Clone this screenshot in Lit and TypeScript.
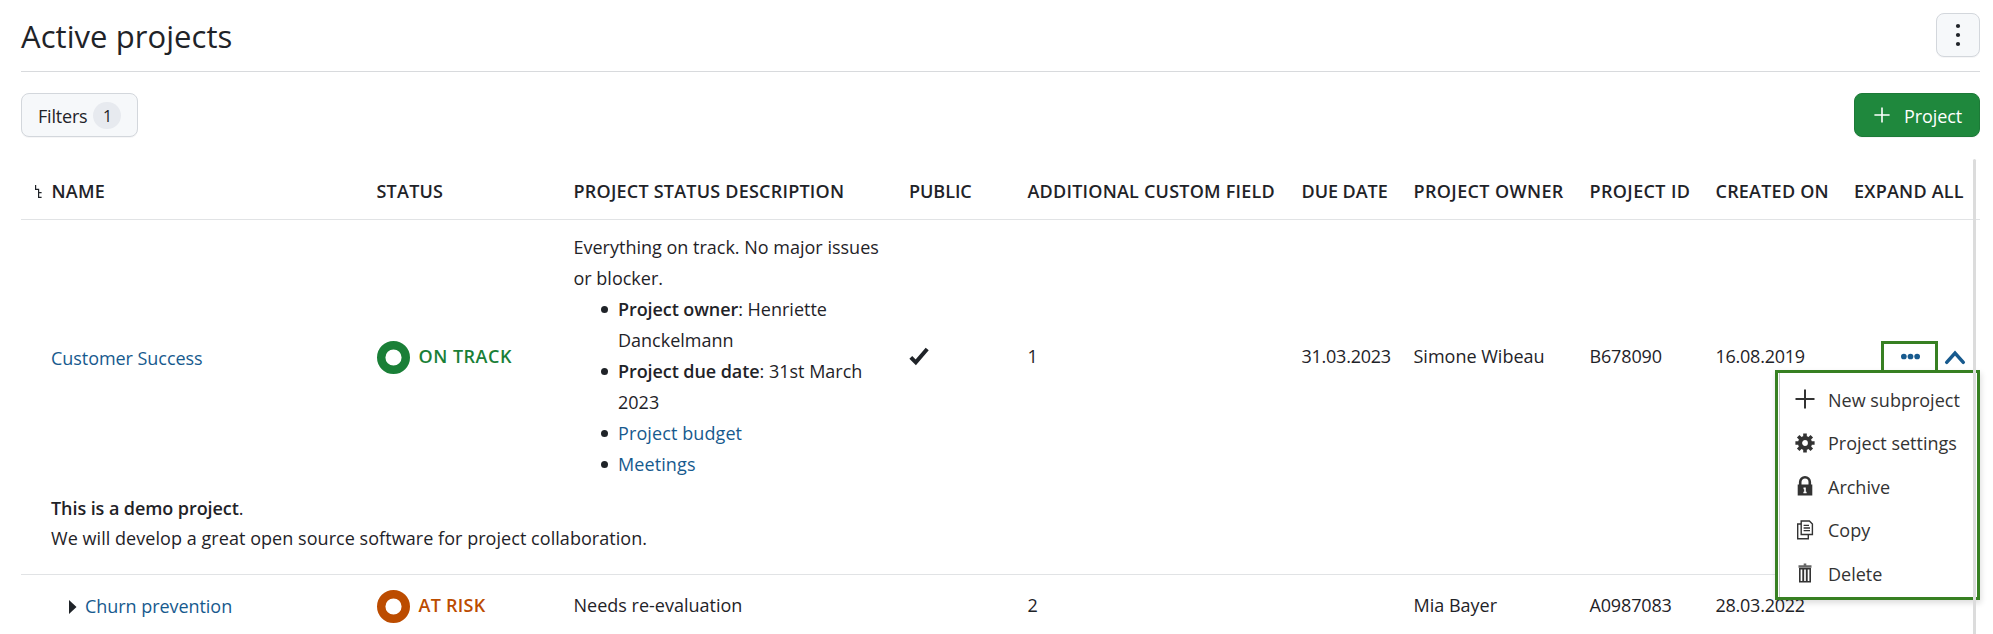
import { LitElement, html, css, svg, nothing } from "lit";
import { customElement, property } from "lit/decorators.js";
import { classMap } from "lit/directives/class-map.js";

const glyphs: Record<string, unknown> = {
  plus: svg`<path d="M10 .5v19M.5 10h19" fill="none" stroke="currentColor" stroke-width="2"/>`,
  gear: svg`<circle cx="10" cy="10" r="5" fill="none" stroke="currentColor" stroke-width="4.2"/>
    <g stroke="currentColor" stroke-width="3.6"><path d="M10 .4v4M10 15.6v4M.4 10h4M15.6 10h4M3.2 3.2l3 3M13.8 13.8l3 3M16.8 3.2l-3 3M6.2 13.8l-3 3"/></g>`,
  lock: svg`<path d="M5.2 9V6a4.8 4.8 0 0 1 9.6 0v3" fill="none" stroke="currentColor" stroke-width="2.6"/>
    <path fill="currentColor" fill-rule="evenodd" d="M2.7 8.6h14.6v11H2.7zM8.5 11.6v1.6h.7v2.6h-.8v1.4h3.2v-1.4h-.8v-4.2z"/>`,
  copy: svg`<g fill="none" stroke="currentColor" stroke-width="1.4"><path d="M6.2 1h8.2l3 3v10.500H6.200z"/><path d="M6 4H2.700v14.700h10.600v-3.700"/><path d="M8.600 5.400h5.400M8.600 8h6.400M8.600 10.600h6.400" stroke-width="1.300"/></g>`,
  trash: svg`<path fill="currentColor" opacity=".75" d="M3.500 2.200h13v2.600h-13zM8.700.5h2.600v2H8.700z"/>
    <path fill="currentColor" fill-rule="evenodd" d="M4 5h12v14.500H4zM5.600 6.500v11.400h1.700V6.500zM9.150 6.500v11.400h1.700V6.500zM12.700 6.500v11.400h1.700V6.500z"/>`,
  check: svg`<path d="M1.800 11.400l5 5L18.200 3" fill="none" stroke="currentColor" stroke-width="4"/>`,
  chevron: svg`<path d="M1.700 15.300L10 6.100l8.300 9.200" fill="none" stroke="currentColor" stroke-width="3.500" stroke-linecap="round"/>`,
  dots: svg`<g fill="currentColor"><circle cx="3" cy="10" r="3"/><circle cx="10" cy="10" r="3"/><circle cx="17" cy="10" r="3"/></g>`,
  kebab: svg`<g fill="currentColor"><circle cx="10" cy="1" r="2.100"/><circle cx="10" cy="10" r="2.100"/><circle cx="10" cy="19" r="2.100"/></g>`,
  ring: svg`<circle cx="10" cy="10" r="7.450" fill="none" stroke="currentColor" stroke-width="5.100"/>`,
};

@customElement("op-icon")
class OpIcon extends LitElement {
  @property() name = "plus";
  static styles = css`
    :host { display: inline-block; width: 20px; height: 20px; flex: none; }
    svg { display: block; width: 100%; height: 100%; overflow: visible; }
  `;
  render() {
    return html`<svg viewBox="0 0 20 20">${glyphs[this.name]}</svg>`;
  }
}

@customElement("op-menu")
class OpMenu extends LitElement {
  static styles = css`
    :host { display: block; box-sizing: border-box; width: 205px; height: 230px; border: 3px solid #378022; background: #fff; box-shadow: 1px 3px 6px rgba(0, 0, 0, .14); color: #333; }
    .list { display: flex; flex-direction: column; height: 100%; box-sizing: border-box; margin-left: 1px; border-left: 1px solid #c8c8c8; padding: 4.500px 0 0 14.500px; }
    .item { display: flex; align-items: center; height: 43.5px; gap: 13.500px; white-space: nowrap; }
    .label { line-height: 26px; padding-top: 1px; }
  `;
  items = [["plus", "New subproject"], ["gear", "Project settings"], ["lock", "Archive"], ["copy", "Copy"], ["trash", "Delete"]];
  render() {
    return html`<div class="list">${this.items.map(([icon, label]) => html`
      <div class="item"><op-icon name=${icon}></op-icon><span class="label">${label}</span></div>`)}</div>`;
  }
}

const headings = ["STATUS", "PROJECT STATUS DESCRIPTION", "PUBLIC", "ADDITIONAL CUSTOM FIELD", "DUE DATE", "PROJECT OWNER", "PROJECT ID", "CREATED ON", "EXPAND ALL"];

@customElement("app-root")
class AppRoot extends LitElement {
  static styles = css`
    :host { display: block; position: relative; box-sizing: border-box; height: 634px; padding: 0 13px 0 21px; overflow: hidden; background: #fff; color: #1f2328; font: 18px/31px "Open Sans", "Noto Sans", sans-serif; white-space: nowrap; }
    .top { display: flex; justify-content: space-between; align-items: flex-start; height: 72px; box-sizing: border-box; padding-top: 13px; border-bottom: 1px solid #d8dadd; }
    h1 { margin: 0; font-size: 31px; line-height: 47px; font-weight: 400; letter-spacing: .06px; }
    .btn { display: flex; align-items: center; box-sizing: border-box; height: 44px; border: 1px solid #d3d7dc; border-radius: 8px; background: #f6f8fa; box-shadow: 0 1px 0 rgba(31, 35, 40, .04); }
    .square { width: 44px; justify-content: center; }
    .tools { display: flex; justify-content: space-between; padding-top: 21px; height: 65px; box-sizing: border-box; }
    .filters { width: 117px; padding: 2px 0 0 16px; letter-spacing: -.2px; }
    .count { width: 28px; height: 27px; margin: -2px 0 0 6px; border-radius: 14px; background: #e7eaef; text-align: center; font-size: 16px; line-height: 29px; }
    .add { width: 126px; padding-left: 19px; color: #fff; background: #1f883d; border-color: #1d7a38; letter-spacing: -.1px; }
    .add op-icon { width: 16px; height: 16px; margin: -1px 14px 0 0; }
    .add .label { padding-top: 2px; }
    .row { display: grid; grid-template-columns: 325.5px 197px 335.5px 118.5px 274px 112px 176px 126px 138.5px 1fr; align-items: center; padding-left: 30px; }
    .head { height: 83px; padding-top: 26px; box-sizing: border-box; border-bottom: 1px solid #e1e3e5; font-weight: 600; letter-spacing: .22px; }
    .head .first { display: flex; align-items: center; margin-left: -16.5px; }
    .tree { width: 7px; height: 13px; margin-right: 10px; }
    .desc { white-space: normal; width: 315px; }
    .wide { letter-spacing: .38px; }
    .snug { letter-spacing: -.05px; }
    .body { padding-top: 12px; padding-bottom: 12px; }
    .sub { height: 61px; padding-top: 0; padding-bottom: 0; }
    .link { color: #175a8e; }
    .name { display: flex; align-items: center; padding-top: 4px; letter-spacing: -.05px; }
    .indent { padding: 2px 0 0 18px; }
    .arrow { width: 8px; height: 14px; margin-right: 8px; }
    .status { display: flex; align-items: center; gap: 9px; font-weight: 600; letter-spacing: .5px; color: #1a7f37; padding-top: 2px; }
    .risk { color: #bc4c00; letter-spacing: .25px; }
    .ring { width: 33px; height: 33px; }
    .state { margin-top: -2px; }
    .num { letter-spacing: -.25px; }
    .code { letter-spacing: -.15px; }
    ul { margin: 0; padding: 0; list-style: none; }
    li { padding-left: 44.5px; display: grid; grid-template-columns: 1fr; }
    li::before { content: ""; grid-area: 1 / 1; width: 7px; height: 7px; margin: 12px 0 0 -17.5px; border-radius: 50%; background: currentColor; }
    li > span { grid-area: 1 / 1; }
    li .link { letter-spacing: .1px; }
    b { font-weight: 600; letter-spacing: -.08px; }
    .about { padding: 1px 0 21px 30px; line-height: 30px; letter-spacing: .05px; border-bottom: 1px solid #e1e3e5; }
    .actions { display: flex; position: relative; align-items: center; height: 31px; padding-left: 46.5px; color: #175a8e; }
    .actions .more { width: 19px; height: 19px; }
    .actions .up { margin: 2px 0 0 25.500px; }
    .frame { position: absolute; left: 27px; top: 0; box-sizing: border-box; width: 57px; height: 33px; border: 3px solid #378022; }
    op-menu { position: absolute; left: 1775px; top: 370px; line-height: 26px; }
    .bar { position: absolute; right: 17px; top: 159px; bottom: 0; width: 3px; border-radius: 2px 2px 0 0; background: #dcdcdc; }
  `;
  status(text: string, risk = false) {
    return html`<div class=${classMap({ status: true, risk })}><op-icon class="ring" name="ring"></op-icon><span class="state">${text}</span></div>`;
  }
  render() {
    return html`
      <div class="top"><h1>Active projects</h1><div class="btn square"><op-icon name="kebab"></op-icon></div></div>
      <div class="tools">
        <div class="btn filters">Filters<span class="count">1</span></div>
        <div class="btn add"><op-icon name="plus"></op-icon><span class="label">Project</span></div>
      </div>
      <div class="row head">
        <div class="first"><svg class="tree" viewBox="0 0 7 13" fill="none" stroke="#1f2328" stroke-width="1.200"><path d="M.6 0v4.400H3.600v7.900H6.600M3.600 7.600H6.600"/></svg>NAME</div>
        ${headings.map((h) => html`<div class=${/OWNER|ID$/.test(h) ? "wide" : /PUBLIC|DUE/.test(h) ? "snug" : nothing}>${h}</div>`)}
      </div>
      <div class="row body">
        <div class="name link">Customer Success</div>
        ${this.status("ON TRACK")}
        <div class="desc">Everything on track. No major issues or blocker.
          <ul>
            <li><span><b>Project owner</b>: Henriette<br>Danckelmann</span></li>
            <li><span><b>Project due date</b>: 31st March<br>2023</span></li>
            <li><span class="link">Project budget</span></li>
            <li><span class="link">Meetings</span></li>
          </ul>
        </div>
        <op-icon name="check"></op-icon>
        <div>1</div>
        <div class="num">31.03.2023</div>
        <div>Simone Wibeau</div>
        <div class="code">B678090</div>
        <div class="num">16.08.2019</div>
        <div class="actions"><span class="frame"></span><op-icon class="more" name="dots"></op-icon><op-icon class="up" name="chevron"></op-icon></div>
      </div>
      <div class="about"><b>This is a demo project</b>.<br>We will develop a great open source software for project collaboration.</div>
      <div class="row sub">
        <div class="name link indent"><svg class="arrow" viewBox="0 0 8 14"><path fill="#1f2328" d="M0 0l7.500 7L0 14z"/></svg>Churn prevention</div>
        ${this.status("AT RISK", true)}
        <div>Needs re-evaluation</div>
        <div></div>
        <div>2</div>
        <div></div>
        <div>Mia Bayer</div>
        <div class="code">A0987083</div>
        <div class="num">28.03.2022</div>
        <div></div>
      </div>
      <op-menu></op-menu>
      <div class="bar"></div>
    `;
  }
}
